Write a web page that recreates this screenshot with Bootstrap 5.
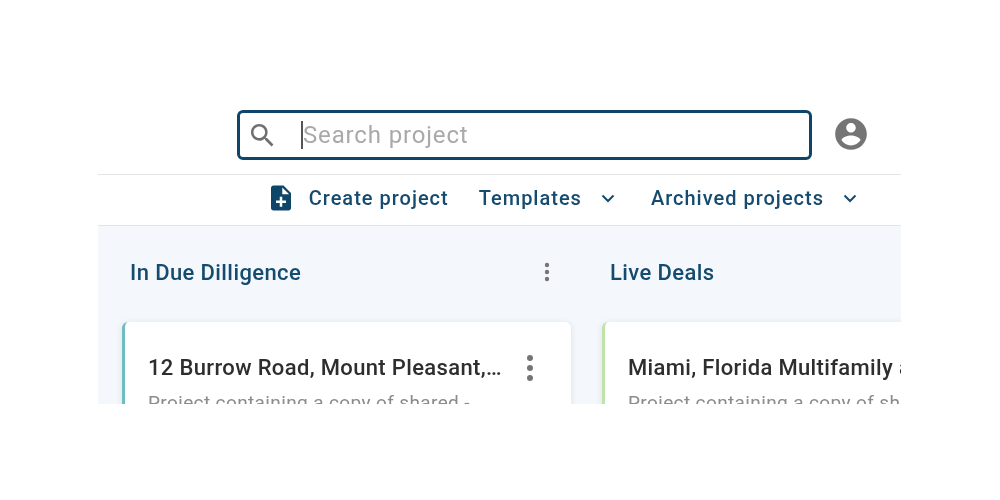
<!DOCTYPE html>
<html lang="en">
<head>
    <meta charset="UTF-8">
    <meta name="viewport" content="width=device-width, initial-scale=1.0">
    <title>Projects</title>
    <link href="https://cdn.jsdelivr.net/npm/bootstrap@5.3.0/dist/css/bootstrap.min.css" rel="stylesheet">

    <style>
        body { background: #fff; font-family: Roboto, sans-serif; }
        .app-frame { width: 803px; height: 304px; margin: 100px 0 0 98px; overflow: hidden; filter: blur(.5px); }

        .top-bar { height: 75px; padding: 10px 31px 0 139px; border-bottom: 1px solid #e2e4e6; }
        .search-box { width: 575px; height: 50px; border: 3px solid #0f4568; border-radius: 6px; padding-left: 7px; }
        .search-caret { width: 2px; height: 28px; margin-left: 23px; background: #555; }
        .search-box input { border: 0; outline: 0; padding: 0; width: 480px; font-size: 24px; letter-spacing: .85px; color: #333; background: transparent; }
        .search-box input::placeholder { color: #a9a9a9; opacity: 1; }
        .user-icon { margin-top: 5px; }

        .tool-bar { height: 51px; padding: 0 41px 4px 0; border-bottom: 1px solid #e2e4e6; color: #154b6f; font-size: 20px; font-weight: 500; letter-spacing: 1px; }
        .tool-item { margin-left: 30px; }
        .tool-item.wide { margin-left: 33px; }
        .file-icon { margin-right: 5px; }

        .board { background: #f4f8fc; height: 178px; padding-left: 24px; gap: 31px; }
        .lane { width: 449px; flex-shrink: 0; }
        .lane-head { height: 96px; padding: 0 21px 4px 8px; color: #154b6f; font-size: 22px; font-weight: 500; letter-spacing: .4px; }
        .deal-card { height: 120px; background: #fff; border-left: 3px solid #6fbcc4; border-radius: 6px; padding: 28px 37px 0 23px; box-shadow: 0 1px 6px rgba(30, 60, 90, .12); }
        .deal-card.live { border-left-color: #bfe3a8; }
        .deal-title { font-size: 22px; font-weight: 500; letter-spacing: .35px; color: #2e2e2e; line-height: 36px; white-space: nowrap; }
        .deal-text { margin-top: 3px; font-size: 19px; letter-spacing: .38px; color: #8b8b8b; line-height: 28px; white-space: nowrap; }
    </style>
</head>
<body>
    <div class="app-frame">
        <!-- search row -->
        <div class="top-bar d-flex justify-content-between">
            <div class="search-box d-flex align-items-center">
                <svg width="31" height="31" viewBox="0 0 24 24" fill="#6f6f6f"><path d="M15.5 14h-.79l-.28-.27A6.47 6.47 0 0 0 16 9.5 6.5 6.5 0 1 0 9.5 16c1.61 0 3.09-.59 4.23-1.57l.27.28v.79l5 4.99L20.49 19l-4.99-5zm-6 0C7.01 14 5 11.99 5 9.500S7.01 5 9.500 5 14 7.01 14 9.500 11.99 14 9.500 14z"/></svg>
                <span class="search-caret"></span>
                <input type="text" placeholder="Search project">
            </div>
            <svg class="user-icon" width="38" height="38" viewBox="0 0 24 24" fill="#757575"><path d="M12 2C6.48 2 2 6.48 2 12s4.48 10 10 10 10-4.48 10-10S17.52 2 12 2zm0 3c1.66 0 3 1.34 3 3s-1.34 3-3 3-3-1.34-3-3 1.34-3 3-3zm0 14.200c-2.500 0-4.710-1.280-6-3.220.03-1.990 4-3.080 6-3.080 1.990 0 5.970 1.090 6 3.080-1.290 1.940-3.500 3.220-6 3.220z"/></svg>
        </div>

        <!-- actions -->
        <div class="tool-bar d-flex justify-content-end align-items-center">
            <div class="tool-item d-flex align-items-center gap-2">
                <svg class="file-icon" width="30" height="30" viewBox="0 0 24 24" fill="#0f4568"><path d="M14 2H6c-1.100 0-2 .9-2 2v16c0 1.100.9 2 2 2h12c1.100 0 2-.9 2-2V8l-6-6zm-1 7V3.500L18.500 9H13zm3 7h-3v3h-2v-3H8v-2h3v-3h2v3h3v2z"/></svg>
                <span>Create project</span>
            </div>
            <div class="tool-item d-flex align-items-center gap-3">
                <span>Templates</span>
                <svg width="20" height="20" viewBox="0 0 20 20" fill="none" stroke="#154b6f" stroke-width="2"><path d="M4.500 7.500 10 13l5.500-5.500"/></svg>
            </div>
            <div class="tool-item wide d-flex align-items-center gap-3">
                <span>Archived projects</span>
                <svg width="20" height="20" viewBox="0 0 20 20" fill="none" stroke="#154b6f" stroke-width="2"><path d="M4.500 7.500 10 13l5.500-5.500"/></svg>
            </div>
        </div>

        <!-- board -->
        <div class="board d-flex">
            <div class="lane">
                <div class="lane-head d-flex justify-content-between align-items-center">
                    <span>In Due Dilligence</span>
                    <svg width="6" height="20" viewBox="0 0 6 20" fill="#757575"><circle cx="3" cy="3" r="2.200"/><circle cx="3" cy="10" r="2.200"/><circle cx="3" cy="17" r="2.200"/></svg>
                </div>
                <div class="deal-card">
                    <div class="d-flex justify-content-between align-items-center">
                        <div class="deal-title">12 Burrow Road, Mount Pleasant,…</div>
                        <svg width="8" height="28" viewBox="0 0 8 28" fill="#757575"><circle cx="4" cy="4" r="3"/><circle cx="4" cy="14" r="3"/><circle cx="4" cy="24" r="3"/></svg>
                    </div>
                    <div class="deal-text">Project containing a copy of shared -</div>
                </div>
            </div>
            <div class="lane">
                <div class="lane-head d-flex align-items-center"><span>Live Deals</span></div>
                <div class="deal-card live">
                    <div class="deal-title">Miami, Florida Multifamily a</div>
                    <div class="deal-text">Project containing a copy of shared -</div>
                </div>
            </div>
        </div>
    </div>

    <script src="https://cdn.jsdelivr.net/npm/bootstrap@5.3.0/dist/js/bootstrap.bundle.min.js"></script>
</body>
</html>
